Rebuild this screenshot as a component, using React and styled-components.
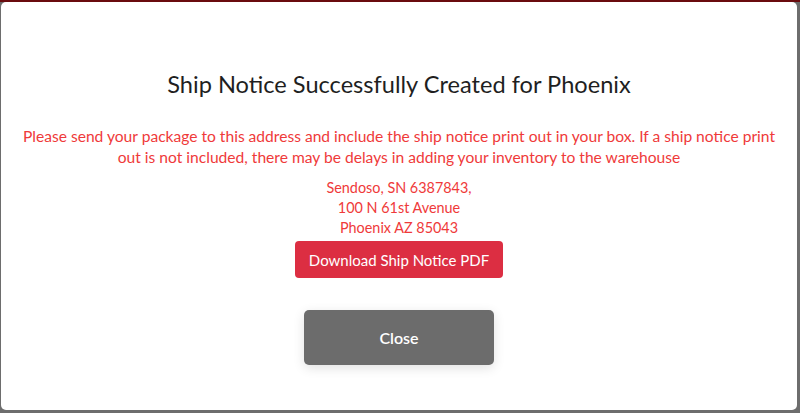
import React from "react";
import styled, { createGlobalStyle } from "styled-components";

const Global = createGlobalStyle`
  html, body { margin: 0; padding: 0; }
  body {
    width: 800px;
    height: 413px;
    overflow: hidden;
    background: linear-gradient(to bottom, #6a0b0e 0px, #6a0b0e 2px, #6d6d6d 2px, #6d6d6d 100%);
    font-family: Lato, "Open Sans", sans-serif;
  }
`;

const Overlay = styled.div`
  width: 800px;
  height: 413px;
  box-sizing: border-box;
  padding: 2px 3px 3px 1px;
  display: flex;
`;

const Modal = styled.div`
  flex: 1;
  background: #fff;
  border-radius: 5px;
  display: flex;
  flex-direction: column;
  align-items: center;
  padding: 67px 20px 0;
`;

const Title = styled.h2`
  margin: 0;
  font-size: 23.6px;
  line-height: 30px;
  font-weight: 400;
  color: #1f1f1f;
`;

const Notice = styled.p`
  margin: 27px 0 0;
  font-size: 15.6px;
  line-height: 21px;
  color: #ef3a3a;
  text-align: center;
`;

const Address = styled.div`
  margin-top: 10px;
  font-size: 14.4px;
  line-height: 20px;
  color: #ef3a3a;
  text-align: center;
`;

const Button = styled.button`
  border: none;
  color: #fff;
  font-family: inherit;
  cursor: pointer;
`;

const DownloadButton = styled(Button)`
  margin-top: 3px;
  width: 208px;
  height: 37px;
  border-radius: 4px;
  background: #dc2e42;
  font-size: 15px;
`;

const CloseButton = styled(Button)`
  margin-top: 32px;
  width: 190px;
  height: 55px;
  border-radius: 5px;
  background: #6c6c6c;
  font-size: 16px;
  font-weight: 600;
  box-shadow: 0 3px 12px rgba(0, 0, 0, 0.12);
`;

export default function App() {
  return (
    <>
      <Global />
      <Overlay>
        <Modal>
          <Title>Ship Notice Successfully Created for Phoenix</Title>
          <Notice>
            Please send your package to this address and include the ship notice print out in your box. If a ship notice print
            out is not included, there may be delays in adding your inventory to the warehouse
          </Notice>
          <Address>
            Sendoso, SN 6387843,
            <br />
            100 N 61st Avenue
            <br />
            Phoenix AZ 85043
          </Address>
          <DownloadButton>Download Ship Notice PDF</DownloadButton>
          <CloseButton>Close</CloseButton>
        </Modal>
      </Overlay>
    </>
  );
}
